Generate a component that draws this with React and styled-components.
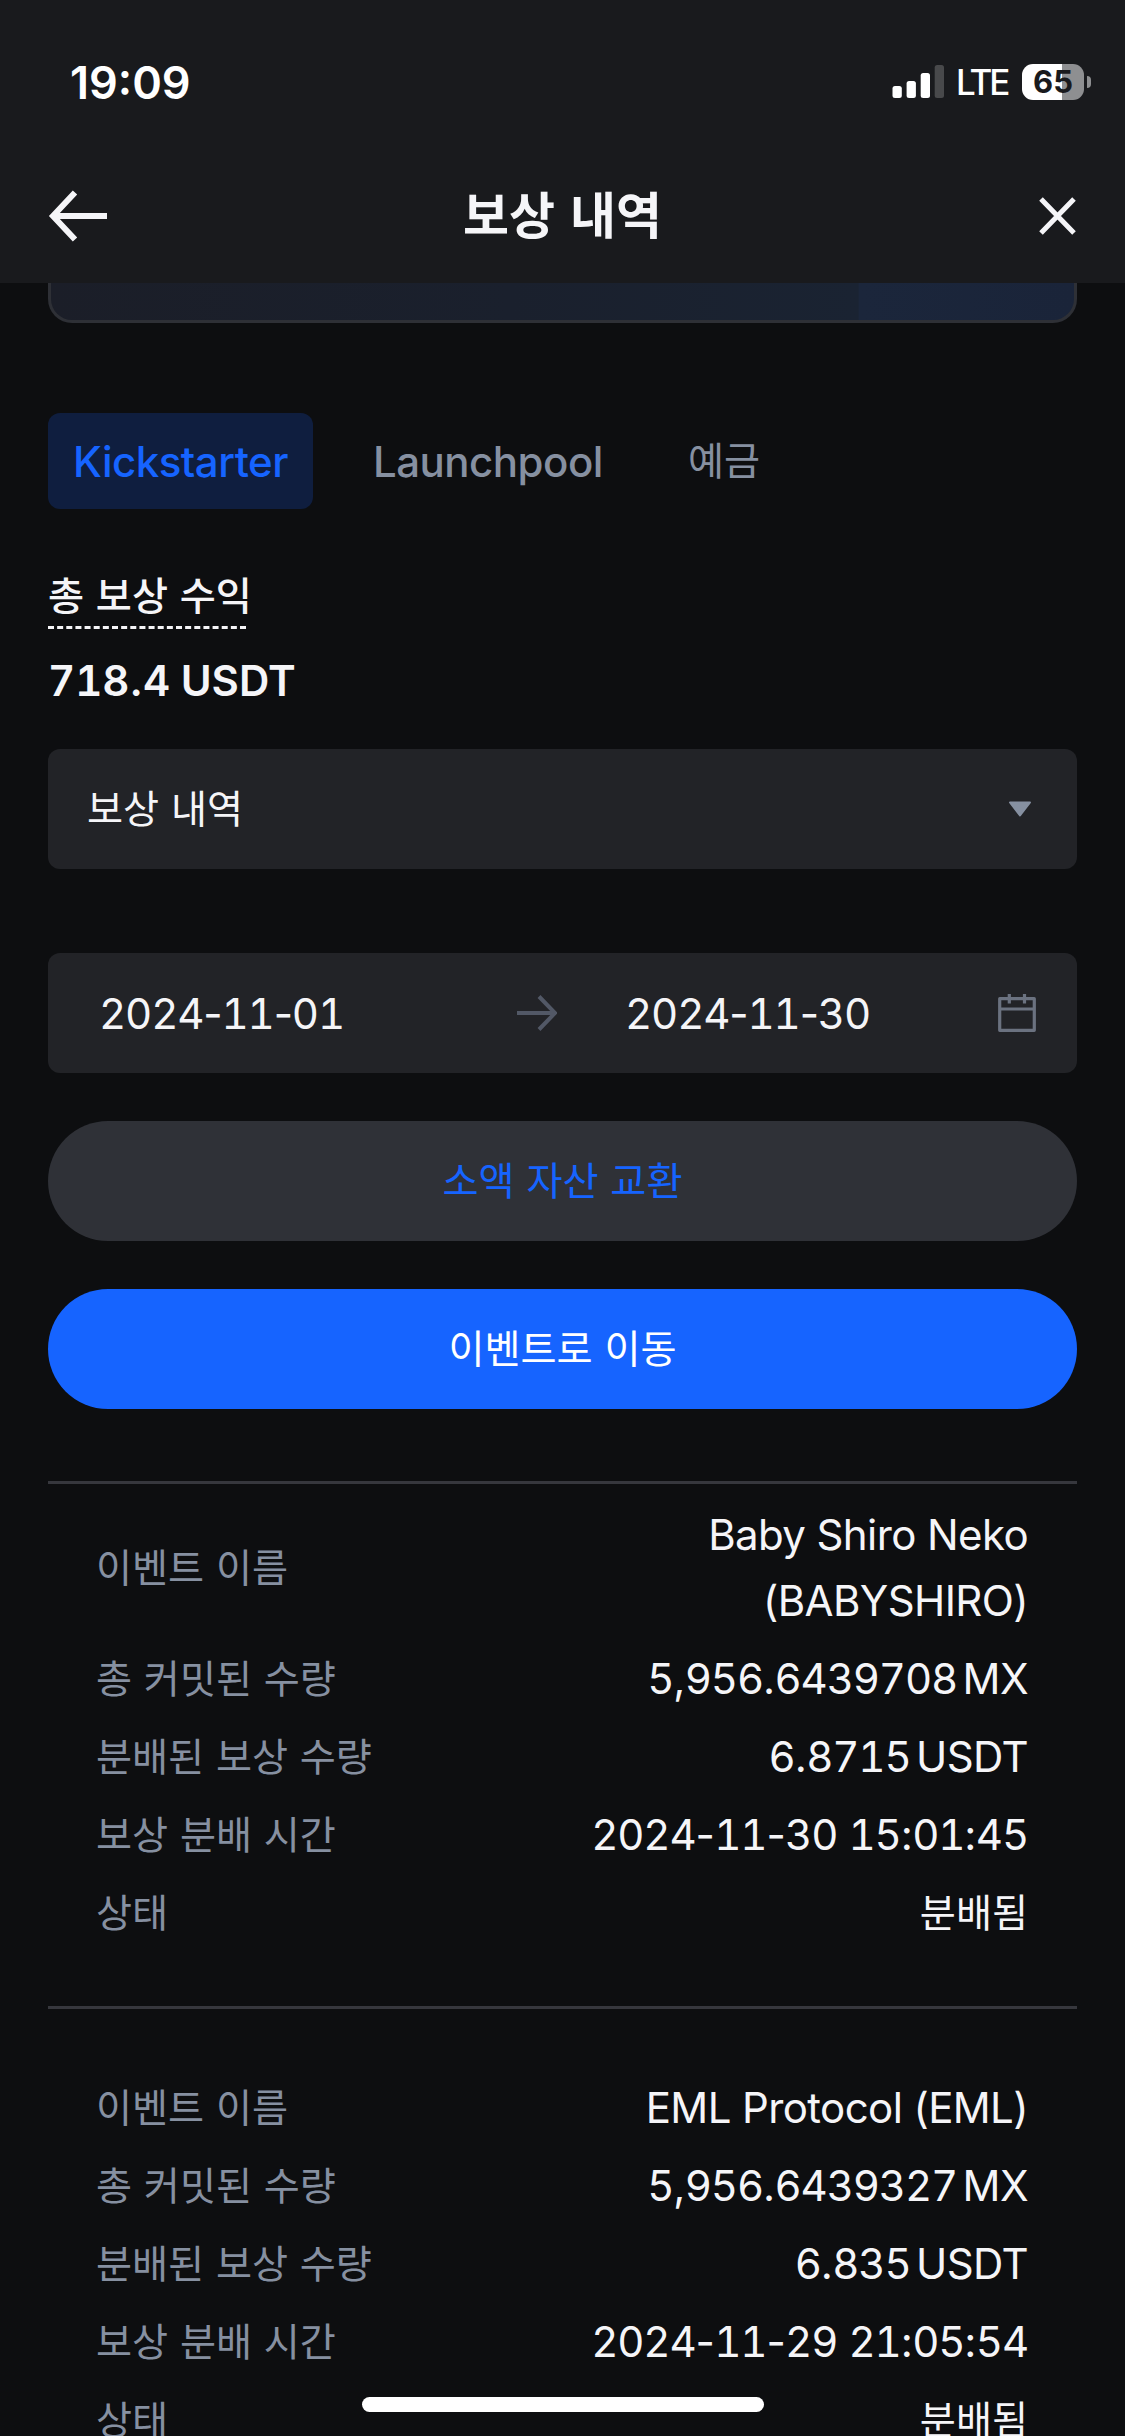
import React from "react";
import styled, { createGlobalStyle } from "styled-components";

const GlobalStyle = createGlobalStyle`
  * {
    box-sizing: border-box;
  }
  body {
    margin: 0;
    background: #0d0e10;
  }
`;

const Screen = styled.div`
  width: 1125px;
  height: 2436px;
  overflow: hidden;
  position: relative;
  background: #0d0e10;
  color: #f5f5f8;
  font-family: Inter, "Noto Sans CJK KR", sans-serif;
  font-size: 42px;
  white-space: nowrap;
`;

const Header = styled.header`
  height: 283px;
  background: #191a1d;
`;

const StatusBar = styled.div`
  display: flex;
  justify-content: space-between;
  height: 146px;
  padding: 46px 34px 0 70px;
`;

const Clock = styled.div`
  height: 74px;
  line-height: 74px;
  font-size: 45px;
  font-weight: 600;
  color: #fff;
`;

const StatusIcons = styled.div`
  display: flex;
  align-items: center;
  height: 72px;
`;

const Network = styled.span`
  width: 62px;
  padding-left: 11px;
  font-size: 35px;
  font-weight: 500;
  letter-spacing: -3px;
  line-height: 74px;
  color: #fff;
`;

const Battery = styled.div`
  display: flex;
  align-items: center;
  margin-left: 15px;
`;

const BatteryBody = styled.div`
  width: 62px;
  height: 36px;
  border-radius: 11px;
  background: linear-gradient(90deg, #fff 65%, #8e8f91 65%);
  color: #191a1d;
  font-size: 31px;
  font-weight: 700;
  line-height: 36px;
  text-align: center;
`;

const BatteryTip = styled.div`
  width: 4px;
  height: 12px;
  margin-left: 3px;
  border-radius: 0 4px 4px 0;
  background: #8e8f91;
`;

const NavBar = styled.div`
  display: flex;
  align-items: center;
  justify-content: space-between;
  height: 137px;
  padding: 3px 48px 0;
`;

const Title = styled.h1`
  margin: 0;
  padding-bottom: 8px;
  font-size: 50px;
  font-weight: 700;
  word-spacing: 3px;
`;

const NavSlot = styled.div`
  display: flex;
  width: 60px;
  justify-content: ${({ $end }) => ($end ? "flex-end" : "flex-start")};
`;

const Content = styled.main`
  padding: 0 48px;
`;

const Banner = styled.div`
  height: 40px;
  border: 3px solid #2e3036;
  border-top: none;
  border-radius: 0 0 24px 24px;
  background: linear-gradient(
    90deg,
    #1b1e28 0%,
    #1a202d 45%,
    #1a2332 78.9%,
    #1b263b 79%,
    #1a2439 100%
  );
`;

const Tabs = styled.div`
  display: flex;
  margin-top: 90px;
`;

const Tab = styled.div`
  display: flex;
  align-items: center;
  height: 96px;
  padding: 0 25px;
  margin-right: 35px;
  border-radius: 12px;
  font-weight: 500;
  letter-spacing: -0.5px;
  color: ${({ $active }) => ($active ? "#1664ff" : "#8690a1")};
  background: ${({ $active }) => ($active ? "#0f1e3f" : "transparent")};
`;

const Korean = styled.span`
  font-family: "Noto Sans CJK KR", sans-serif;
  font-size: 39.2px;
  font-weight: ${({ $weight }) => $weight ?? 400};
  letter-spacing: 0;
  word-spacing: 3px;
  line-height: 58px;
  padding-bottom: 6px;
`;

const TotalLabel = styled.div`
  width: 198px;
  height: 65px;
  margin-top: 55px;
  border-bottom: 3px dashed #f5f5f8;
`;

const TotalValue = styled.div`
  height: 66px;
  margin-top: 18px;
  font-weight: 600;
  line-height: 68px;
`;

const Field = styled.div`
  display: flex;
  align-items: center;
  height: 120px;
  margin-top: ${({ $top }) => $top}px;
  padding: 0 ${({ $right }) => $right}px 0 ${({ $left }) => $left}px;
  border-radius: 12px;
  background: #222327;
`;

const Spacer = styled.div`
  flex: 1;
`;

const DateText = styled.span`
  width: ${({ $width }) => $width}px;
  letter-spacing: -1.15px;
`;

const Tabular = styled.span`
  font-feature-settings: "tnum";
`;

const Button = styled.div`
  display: flex;
  align-items: center;
  justify-content: center;
  height: 120px;
  margin-top: 48px;
  border-radius: 60px;
  color: ${({ $primary }) => ($primary ? "#fff" : "#1664ff")};
  background: ${({ $primary }) => ($primary ? "#1664ff" : "#2f3137")};
`;

const EventList = styled.div`
  margin-top: 72px;
`;

const Event = styled.section`
  padding: ${({ $top }) => $top}px 49px 54px 48px;
  border-top: 3px solid #36373d;
`;

const Row = styled.div`
  display: flex;
  align-items: center;
  justify-content: space-between;
  min-height: 78px;
  padding: 6px 0;

  ${Tabular} {
    letter-spacing: -1.15px;
  }
`;

const Label = styled(Korean)`
  color: #8690a1;
`;

const Value = styled.div`
  line-height: 66px;
  text-align: right;
  white-space: pre-line;
  letter-spacing: -0.6px;
`;

const Unit = styled.span`
  margin-left: 5.5px;
`;

const HomeIndicator = styled.div`
  position: absolute;
  left: 362px;
  bottom: 24px;
  width: 402px;
  height: 15px;
  border-radius: 8px;
  background: #fff;
`;

const SignalIcon = () => (
  <svg width="53" height="34" viewBox="0 0 53 34">
    <rect x="0.5" y="21" width="9.3" height="12" rx="2.5" fill="#fff" />
    <rect x="14.6" y="16" width="9.3" height="17" rx="2.5" fill="#fff" />
    <rect x="28.7" y="8" width="9.3" height="25" rx="2.5" fill="#fff" />
    <rect x="42.7" y="0" width="9.3" height="33" rx="2.5" fill="#48494b" />
  </svg>
);

const BackIcon = () => (
  <svg width="60" height="52" viewBox="0 0 60 52" fill="none">
    <path d="M59 26H5M27 2.5L5 26l22 23.5" stroke="#f5f5f8" strokeWidth="6" />
  </svg>
);

const CloseIcon = () => (
  <svg width="38" height="38" viewBox="0 0 38 38" fill="none">
    <path d="M2 2l33 34M35 2L2 36" stroke="#f5f5f8" strokeWidth="5" />
  </svg>
);

const CaretIcon = () => (
  <svg width="24" height="16" viewBox="0 0 24 16">
    <path
      d="M2 1.5h20L12 14.5z"
      fill="#8690a1"
      stroke="#8690a1"
      strokeWidth="2"
      strokeLinejoin="round"
    />
  </svg>
);

const RangeIcon = () => (
  <svg width="40" height="36" viewBox="0 0 40 36" fill="none">
    <path d="M0 18h38M22 1.5L38 18 22 34.5" stroke="#525866" strokeWidth="4" />
  </svg>
);

const CalendarIcon = () => (
  <svg width="38" height="38" viewBox="0 0 38 38" fill="none">
    <path
      d="M1.7 4.7h34.6v31.6H1.7zM1.7 15h34.6M11.3 0v9.5M26.5 0v9.5"
      stroke="#6b7280"
      strokeWidth="3.2"
      strokeLinejoin="round"
    />
  </svg>
);

// tabular figures for the digits only, punctuation keeps its own width
const Figures = ({ children }) =>
  children
    .split(/(\d+)/)
    .map((part, i) =>
      /\d/.test(part) ? <Tabular key={i}>{part}</Tabular> : part
    );

const events = [
  {
    name: "Baby Shiro Neko\n(BABYSHIRO)",
    committed: "5,956.6439708",
    reward: "6.8715",
    time: "2024-11-30 15:01:45",
    top: 12,
  },
  {
    name: "EML Protocol (EML)",
    committed: "5,956.6439327",
    reward: "6.835",
    time: "2024-11-29 21:05:54",
    top: 60,
  },
];

const EventItem = ({ event }) => (
  <Event $top={event.top}>
    <Row>
      <Label>이벤트 이름</Label>
      <Value>{event.name}</Value>
    </Row>
    <Row>
      <Label>총 커밋된 수량</Label>
      <Value>
        <Figures>{event.committed}</Figures>
        <Unit>MX</Unit>
      </Value>
    </Row>
    <Row>
      <Label>분배된 보상 수량</Label>
      <Value>
        <Figures>{event.reward}</Figures>
        <Unit>USDT</Unit>
      </Value>
    </Row>
    <Row>
      <Label>보상 분배 시간</Label>
      <Value>
        <Figures>{event.time}</Figures>
      </Value>
    </Row>
    <Row>
      <Label>상태</Label>
      <Korean>분배됨</Korean>
    </Row>
  </Event>
);

const App = () => {
  return (
    <>
      <GlobalStyle />
      <Screen>
        <Header>
          <StatusBar>
            <Clock>19:09</Clock>
            <StatusIcons>
              <SignalIcon />
              <Network>LTE</Network>
              <Battery>
                <BatteryBody>65</BatteryBody>
                <BatteryTip />
              </Battery>
            </StatusIcons>
          </StatusBar>
          <NavBar>
            <NavSlot>
              <BackIcon />
            </NavSlot>
            <Title>보상 내역</Title>
            <NavSlot $end>
              <CloseIcon />
            </NavSlot>
          </NavBar>
        </Header>
        <Content>
          <Banner />
          <Tabs>
            <Tab $active>Kickstarter</Tab>
            <Tab>Launchpool</Tab>
            <Tab>
              <Korean>예금</Korean>
            </Tab>
          </Tabs>
          <TotalLabel>
            <Korean $weight={500}>총 보상 수익</Korean>
          </TotalLabel>
          <TotalValue>
            <Figures>718.4 USDT</Figures>
          </TotalValue>
          <Field $top={36} $left={39} $right={45}>
            <Korean>보상 내역</Korean>
            <Spacer />
            <CaretIcon />
          </Field>
          <Field $top={84} $left={51} $right={41}>
            <DateText $width={418}>
              <Figures>2024-11-01</Figures>
            </DateText>
            <RangeIcon />
            <Spacer />
            <DateText $width={373}>
              <Figures>2024-11-30</Figures>
            </DateText>
            <CalendarIcon />
          </Field>
          <Button>
            <Korean>소액 자산 교환</Korean>
          </Button>
          <Button $primary>
            <Korean>이벤트로 이동</Korean>
          </Button>
          <EventList>
            {events.map((event) => (
              <EventItem key={event.committed} event={event} />
            ))}
          </EventList>
        </Content>
        <HomeIndicator />
      </Screen>
    </>
  );
};

export default App;
